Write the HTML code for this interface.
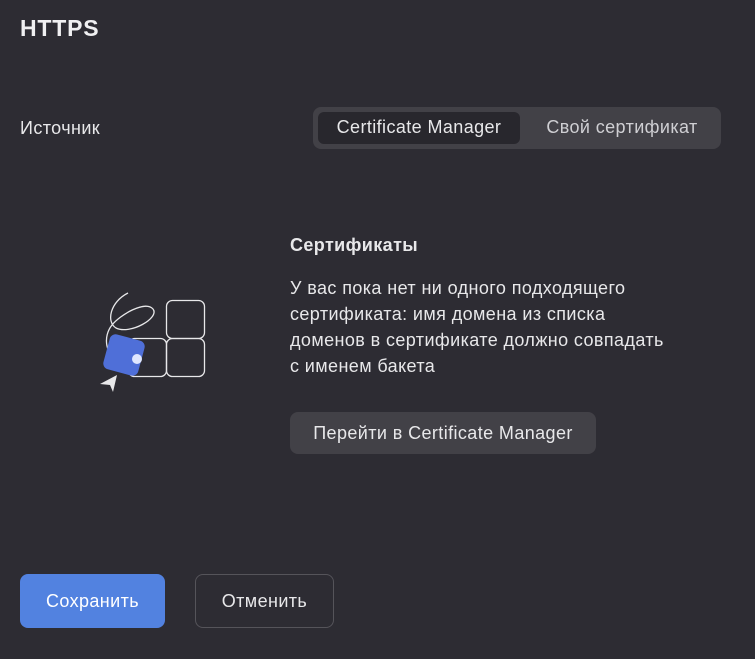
<!DOCTYPE html>
<html><head><meta charset="utf-8"><style>
*{margin:0;padding:0;box-sizing:border-box}
body{width:755px;height:659px;background:#2d2c33;font-family:"Liberation Sans",sans-serif;color:#e8e8ea;position:relative;overflow:hidden;letter-spacing:0.4px}
.a{position:absolute;white-space:nowrap}
</style></head><body>
<div class="a" style="left:20px;top:15px;font-size:23px;font-weight:bold;color:#f0f0f2;letter-spacing:0.8px">HTTPS</div>
<div class="a" style="left:20px;top:118px;font-size:18px">Источник</div>
<div class="a" style="left:313px;top:107px;width:408px;height:42px;background:#424147;border-radius:8px"></div>
<div class="a" style="left:318px;top:112px;width:202px;height:32px;background:#28272d;border-radius:6px"></div>
<div class="a" style="left:318px;top:117px;width:202px;text-align:center;font-size:18px;color:#e8e8ea">Certificate Manager</div>
<div class="a" style="left:528px;top:117px;width:188px;text-align:center;font-size:18px;color:#cfcfd3">Свой сертификат</div>
<svg class="a" style="left:90px;top:280px" width="130" height="120" viewBox="90 280 130 120">
<g fill="none" stroke="#e8e8ea" stroke-width="1.3">
<rect x="166.5" y="300.5" width="38" height="38" rx="6"/>
<rect x="166.5" y="338.5" width="38" height="38" rx="6"/>
<rect x="128.5" y="338.5" width="38" height="38" rx="6"/>
<path d="M128 293 C110 302 106 322 116 328 C130 335 160 318 153 309 C145 300 120 315 112 325 C103 336 104 355 122 365"/>
</g>
<rect x="106" y="337" width="36" height="36" rx="6" fill="#4f6fd8" transform="rotate(15 124 355)"/>
<circle cx="137" cy="359" r="5" fill="#dfe7ff"/>
<path d="M100 384 L117 375 L113 392 L110 385 Z" fill="#e8e8ea"/>
</svg>
<div class="a" style="left:290px;top:235px;font-size:18px;font-weight:bold">Сертификаты</div>
<div class="a" style="left:290px;top:275px;width:440px;font-size:18px;line-height:26px">У вас пока нет ни одного подходящего<br>сертификата: имя домена из списка<br>доменов в сертификате должно совпадать<br>с именем бакета</div>
<div class="a" style="left:290px;top:412px;width:306px;height:42px;background:#424147;border-radius:8px;text-align:center;line-height:42px;font-size:18px">Перейти в Certificate Manager</div>
<div class="a" style="left:20px;top:574px;width:145px;height:54px;background:#5282e0;border-radius:8px;text-align:center;line-height:54px;font-size:18px;color:#fff">Сохранить</div>
<div class="a" style="left:195px;top:574px;width:139px;height:54px;border:1px solid #55545a;border-radius:8px;text-align:center;line-height:52px;font-size:18px">Отменить</div>
</body></html>
